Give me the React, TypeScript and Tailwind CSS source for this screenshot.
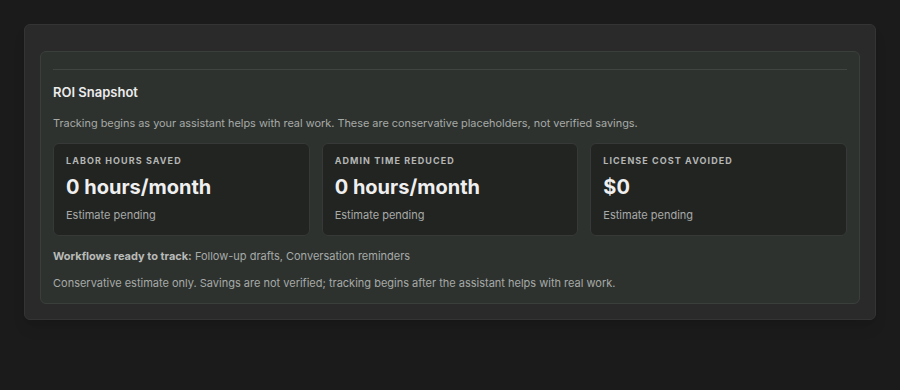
import React from 'react';

const metrics = [
    { label: 'Labor hours saved', value: '0 hours/month' },
    { label: 'Admin time reduced', value: '0 hours/month' },
    { label: 'License cost avoided', value: '$0' },
];

export default function App() {
    return (
        <div className="w-[900px] h-[390px] bg-[#1b1b1b] pt-6 px-6 font-['Inter',sans-serif]">
            <div className="bg-[#2a2a2a] border border-[#343434] rounded-md px-[15px] pt-[26px] pb-[15px] shadow-lg">
                {/* ROI card */}
                <div className="bg-[#2e322f] border border-[#3a3f3b] rounded-md px-3 pt-[17px] pb-3">
                    <div className="border-t border-[#404541]" />
                    <h3 className="mt-3 text-[13px] leading-5 font-semibold text-[#ececec]">ROI Snapshot</h3>
                    <p className="mt-[13px] text-[10.9px] leading-4 text-[#a6aaa7]">
                        Tracking begins as your assistant helps with real work. These are conservative placeholders, not verified savings.
                    </p>

                    <div className="mt-3 grid grid-cols-3 gap-3">
                        {metrics.map((m) => (
                            <div key={m.label} className="bg-[#222422] border border-[#363937] rounded-md px-3 pt-3 pb-3">
                                <div className="text-[9px] leading-[10px] font-bold uppercase tracking-[0.12em] text-[#b4b6b4]">{m.label}</div>
                                <div className="mt-[7px] text-[20px] leading-7 font-bold text-[#efefef]">{m.value}</div>
                                <div className="mt-[6px] text-[11px] leading-4 text-[#a8aaa8]">Estimate pending</div>
                            </div>
                        ))}
                    </div>

                    <p className="mt-3 text-[11px] leading-4 text-[#a6aaa7]">
                        <span className="font-bold text-[#b8bbb8]">Workflows ready to track:</span> Follow-up drafts, Conversation reminders
                    </p>
                    <p className="mt-[11px] text-[11px] leading-4 text-[#a6aaa7]">
                        Conservative estimate only. Savings are not verified; tracking begins after the assistant helps with real work.
                    </p>
                </div>
            </div>
        </div>
    );
}
